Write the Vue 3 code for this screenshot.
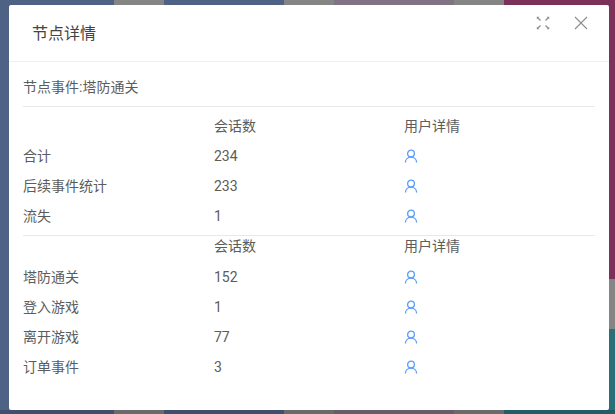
<script setup>
const tables = [
  [
    { name: '合计', count: 234 },
    { name: '后续事件统计', count: 233 },
    { name: '流失', count: 1 },
  ],
  [
    { name: '塔防通关', count: 152 },
    { name: '登入游戏', count: 1 },
    { name: '离开游戏', count: 77 },
    { name: '订单事件', count: 3 },
  ],
]
const topBands = ['#4e6285', '#858585', '#4e6285', '#858585', '#7f7385', '#858585', '#7b3159']
const bottomBands = ['#3f506d', '#6a6a6a', '#3f506d', '#6a6a6a', '#665c6a', '#6a6a6a', '#235c64']
const widths = [114, 50, 120, 50, 120, 50, 111]
</script>

<template>
  <div class="page">
    <div class="backdrop">
      <div class="band-row top">
        <div v-for="(c, i) in topBands" :key="i" :style="{ width: widths[i] + 'px', background: c }"></div>
      </div>
      <div class="middle">
        <div class="side left"></div>
        <div class="side right">
          <div class="seg purple"></div>
          <div class="seg gray"></div>
          <div class="seg teal"></div>
        </div>
      </div>
      <div class="band-row bottom">
        <div v-for="(c, i) in bottomBands" :key="i" :style="{ width: widths[i] + 'px', background: c }"></div>
      </div>
    </div>
    <div class="modal">
      <header class="head">
        <span class="title">节点详情</span>
        <div class="tools">
          <svg width="14" height="14" viewBox="0 0 14 14" fill="none" stroke="#8c8c8c" stroke-width="1.3">
            <path d="M1.5 1.5l3 3M12.5 1.5l-3 3M1.5 12.5l3-3M12.5 12.5l-3-3" />
            <path d="M0.8 0.8h2.4L0.8 3.2zM13.2 0.8h-2.4l2.4 2.4zM0.8 13.2h2.4l-2.4-2.4zM13.2 13.2h-2.4l2.4-2.4z" fill="#8c8c8c" stroke="none" />
          </svg>
          <svg width="14" height="14" viewBox="0 0 14 14" fill="none" stroke="#8c8c8c" stroke-width="1.1">
            <path d="M1 1l12 12M13 1L1 13" />
          </svg>
        </div>
      </header>
      <div class="body">
        <div class="event">节点事件:塔防通关</div>
        <section v-for="(rows, t) in tables" :key="t" class="table" :class="{ second: t === 1 }">
          <div class="row heading">
            <span></span><span>会话数</span><span>用户详情</span>
          </div>
          <div v-for="r in rows" :key="r.name" class="row">
            <span>{{ r.name }}</span>
            <span>{{ r.count }}</span>
            <span class="icon-cell">
              <svg width="14" height="14" viewBox="0 0 14 14" fill="none" stroke="#5a9dff" stroke-width="1.3">
                <circle cx="7" cy="4.6" r="3.4" />
                <path d="M1.4 13.4c0-3 2.4-5.2 5.6-5.2s5.6 2.2 5.6 5.2" />
              </svg>
            </span>
          </div>
        </section>
      </div>
    </div>
  </div>
</template>

<style>
html, body { margin: 0; }
</style>

<style scoped>
.page {
  position: relative;
  width: 615px;
  height: 414px;
  overflow: hidden;
  background: #4e6285;
  font-family: Roboto, "Noto Sans CJK SC", sans-serif;
  color: #5c5c5c;
  font-size: 14px;
}
.backdrop {
  position: absolute;
  inset: 0;
  display: flex;
  flex-direction: column;
}
.band-row { display: flex; }
.band-row.top { height: 5px; }
.band-row.bottom { height: 4px; }
.middle {
  height: 405px;
  display: flex;
  justify-content: space-between;
}
.side { width: 9px; }
.side.left { background: #4e6285; }
.side.right { width: 6px; display: flex; flex-direction: column; }
.seg.purple { height: 274px; background: #7b3159; }
.seg.gray { height: 50px; background: #858585; }
.seg.teal { flex: 1; background: #2a6e78; }
.modal {
  position: absolute;
  left: 9px;
  top: 5px;
  width: 600px;
  height: 405px;
  background: #fff;
  border-radius: 2px;
}
.head {
  height: 56px;
  border-bottom: 1px solid #f0f0f0;
  display: flex;
  align-items: flex-start;
  justify-content: space-between;
  padding: 0 21px 0 23px;
}
.title {
  font-size: 16px;
  line-height: 58px;
  color: #444;
}
.tools { display: flex; gap: 24px; padding-top: 11px; }
.body { padding: 0 14px; }
.event {
  height: 44px;
  line-height: 51px;
  border-bottom: 1px solid #e8e8e8;
}
.table { padding: 4px 0; }
.table.second { padding: 0; border-top: 1px solid #e8e8e8; }
.row {
  display: grid;
  grid-template-columns: 191px 190px 190px;
  height: 30px;
  line-height: 30px;
}
.table.second .row.heading { height: 26px; line-height: 20px; }
.icon-cell { display: flex; align-items: center; }
</style>
